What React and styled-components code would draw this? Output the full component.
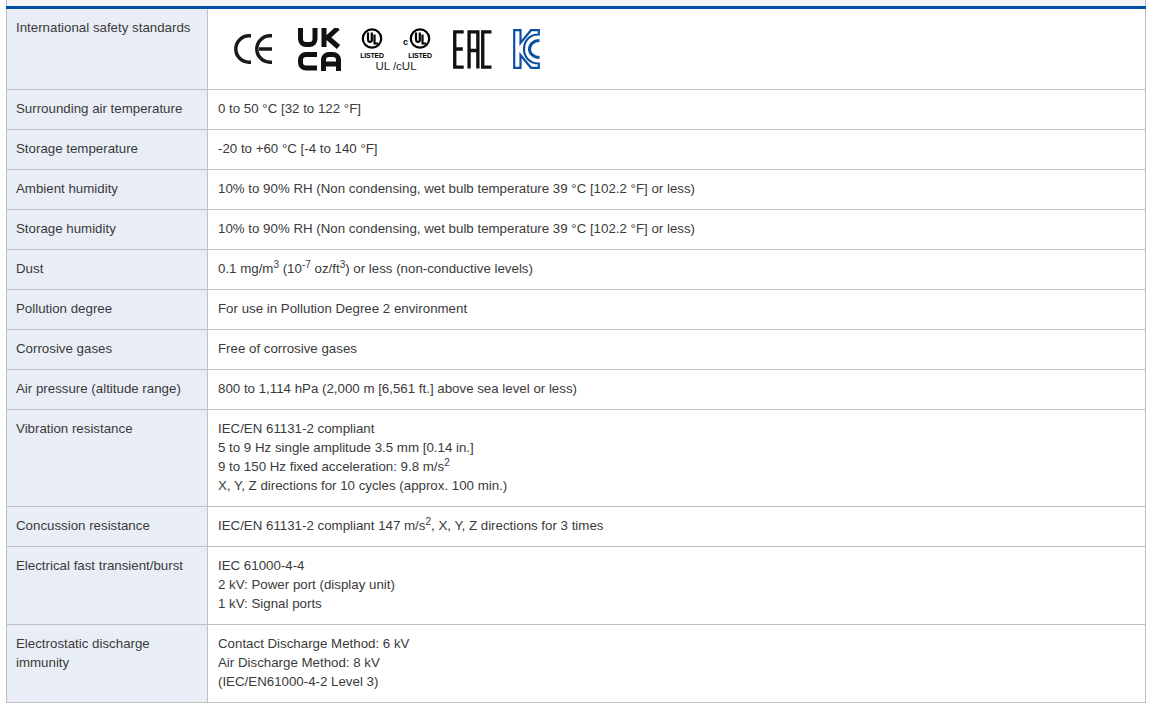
import React from 'react'
import styled, { createGlobalStyle } from 'styled-components'

const GlobalStyle = createGlobalStyle`
  html, body {
    margin: 0;
    padding: 0;
    background: #fff;
  }
`

const Page = styled.div`
  width: 1140px;
  margin-left: 6px;
  font-family: 'Liberation Sans', Arial, sans-serif;
  font-size: 13.3px;
  line-height: 19px;
  color: #3a3a3a;
`

const TopBand = styled.div`
  height: 6px;
  box-sizing: border-box;
  background: #f4f4f4;
  border-left: 1px solid #bfbfbf;
  border-right: 1px solid #bfbfbf;
`

const Table = styled.table`
  width: 100%;
  border-collapse: collapse;
  table-layout: fixed;
  border-top: 3px solid #0050a8;
`

const Row = styled.tr`
  border-bottom: 1px solid #bfbfbf;
`

const Head = styled.th`
  width: 181px;
  padding: 9px 10px 11px 9px;
  background: #e9eef6;
  border-left: 1px solid #bfbfbf;
  border-right: 1px solid #bfbfbf;
  font-weight: 400;
  text-align: left;
  vertical-align: top;
`

const Cell = styled.td`
  padding: 9px 10px 11px;
  border-right: 1px solid #bfbfbf;
  vertical-align: top;
`

const Sup = styled.sup`
  font-size: 10px;
  line-height: 0;
`

const Marks = styled.div`
  display: flex;
  align-items: flex-start;
  height: 60px;
  padding: 10px 0 0 16px;
  box-sizing: border-box;
`

const Logo = styled.svg`
  flex: none;
  margin-left: ${p => p.$left || 0}px;
  margin-top: ${p => p.$top || 0}px;
  fill: none;
`

const CeMark = () => (
  <Logo $top={6} width="39" height="30" viewBox="0 0 39 30" stroke="#1a1a1a" strokeWidth="3.500">
    <path d="M17 1.800h-2a13.200 13.200 0 0 0 0 26.400h2" />
    <path d="M38 1.800h-2a13.200 13.200 0 0 0 0 26.400h2M25 15h13" />
  </Logo>
)

const UkcaMark = () => (
  <Logo $left={25} width="43" height="43" viewBox="0 0 43 43" stroke="#111" strokeWidth="5">
    <path d="M2.500 0v11a5.500 5.500 0 0 0 5.500 5.500h3.500a5.500 5.500 0 0 0 5.500-5.500V0" />
    <path d="M26 0v19M26 9.500h3.500L40 0M29.500 9.500L40.500 19" />
    <path d="M19 26.500H8a5.500 5.500 0 0 0-5.500 5.500v2.500A5.500 5.500 0 0 0 8 40h11" />
    <path d="M25.500 43V32a5.500 5.500 0 0 1 5.500-5.500h4a5.500 5.500 0 0 1 5.500 5.500v11M25.500 36h15" />
  </Logo>
)

const UlCircle = () => (
  <svg width="22" height="21" viewBox="0 0 22 21" fill="none" stroke="#000">
    <circle cx="11" cy="10.500" r="9.200" strokeWidth="2.200" />
    <path d="M7 4.500v7.500a2 2 0 0 0 3.800 0.800V4.500M13.500 6.500v9H17" strokeWidth="2.200" />
  </svg>
)

const UlGroup = styled.div`
  flex: none;
  width: 70px;
  margin-left: 20px;
  display: flex;
  flex-direction: column;
  align-items: center;
  color: #222;
`

const UlRow = styled.div`
  display: flex;
  justify-content: space-between;
  width: 100%;
`

const UlItem = styled.div`
  position: relative;
  display: flex;
  flex-direction: column;
  align-items: center;
  width: 22px;
`

const CPrefix = styled.span`
  position: absolute;
  left: -6px;
  top: 10px;
  font-size: 9px;
  font-weight: 700;
  line-height: 8px;
  color: #000;
`

const ListedLabel = styled.span`
  margin-top: 3px;
  font-family: 'Liberation Sans Narrow', 'Liberation Sans', Arial, sans-serif;
  font-size: 7px;
  font-weight: 700;
  line-height: 7px;
  letter-spacing: -0.2px;
  color: #000;
`

const UlCaption = styled.span`
  margin-top: 2px;
  font-size: 11.500px;
  line-height: 10px;
  white-space: nowrap;
`

const EacMark = () => (
  <Logo $left={22} $top={2} width="39" height="39" viewBox="0 0 40 39" stroke="#111" strokeWidth="3.400">
    <path d="M11 1.500H1.800v36H11M1.800 19H10" />
    <path d="M16.500 39V1.500H25.500V39M16.500 20.500h9" />
    <path d="M39.500 1.500H30.500v36h9" />
  </Logo>
)

const KcMark = () => (
  <Logo $left={21} $top={1} width="27" height="40" viewBox="0 0 27 40" stroke="#0b4ea2" strokeWidth="2.200">
    <path d="M1.200 1.200H7.500V14L18 1.200H25.800V5.500C15.500 5.500 11 13 11 20S15.500 34.500 25.800 34.500V38.800H18L7.500 26V38.800H1.200Z" />
    <path d="M26.500 11.500C20.500 11.500 16.500 15.500 16.500 20S20.500 28.500 26.500 28.500" strokeWidth="3" />
  </Logo>
)

const Standards = () => (
  <Marks>
    <CeMark />
    <UkcaMark />
    <UlGroup>
      <UlRow>
        <UlItem>
          <UlCircle />
          <ListedLabel>LISTED</ListedLabel>
        </UlItem>
        <UlItem>
          <CPrefix>c</CPrefix>
          <UlCircle />
          <ListedLabel>LISTED</ListedLabel>
        </UlItem>
      </UlRow>
      <UlCaption>UL /cUL</UlCaption>
    </UlGroup>
    <EacMark />
    <KcMark />
  </Marks>
)

const humidity = '10% to 90% RH (Non condensing, wet bulb temperature 39 °C [102.2 °F] or less)'

const rows = [
  ['International safety standards', <Standards />],
  ['Surrounding air temperature', '0 to 50 °C [32 to 122 °F]'],
  ['Storage temperature', '-20 to +60 °C [-4 to 140 °F]'],
  ['Ambient humidity', humidity],
  ['Storage humidity', humidity],
  ['Dust', <>0.1 mg/m<Sup>3</Sup> (10<Sup>-7</Sup> oz/ft<Sup>3</Sup>) or less (non-conductive levels)</>],
  ['Pollution degree', 'For use in Pollution Degree 2 environment'],
  ['Corrosive gases', 'Free of corrosive gases'],
  ['Air pressure (altitude range)', '800 to 1,114 hPa (2,000 m [6,561 ft.] above sea level or less)'],
  ['Vibration resistance', <>IEC/EN 61131-2 compliant<br />5 to 9 Hz single amplitude 3.5 mm [0.14 in.]<br />9 to 150 Hz fixed acceleration: 9.8 m/s<Sup>2</Sup><br />X, Y, Z directions for 10 cycles (approx. 100 min.)</>],
  ['Concussion resistance', <>IEC/EN 61131-2 compliant 147 m/s<Sup>2</Sup>, X, Y, Z directions for 3 times</>],
  ['Electrical fast transient/burst', <>IEC 61000-4-4<br />2 kV: Power port (display unit)<br />1 kV: Signal ports</>],
  ['Electrostatic discharge immunity', <>Contact Discharge Method: 6 kV<br />Air Discharge Method: 8 kV<br />(IEC/EN61000-4-2 Level 3)</>],
]

export default function App() {
  return (
    <Page>
      <GlobalStyle />
      <TopBand />
      <Table>
        <tbody>
          {rows.map(([label, value]) => (
            <Row key={label}>
              <Head>{label}</Head>
              <Cell>{value}</Cell>
            </Row>
          ))}
        </tbody>
      </Table>
    </Page>
  )
}
